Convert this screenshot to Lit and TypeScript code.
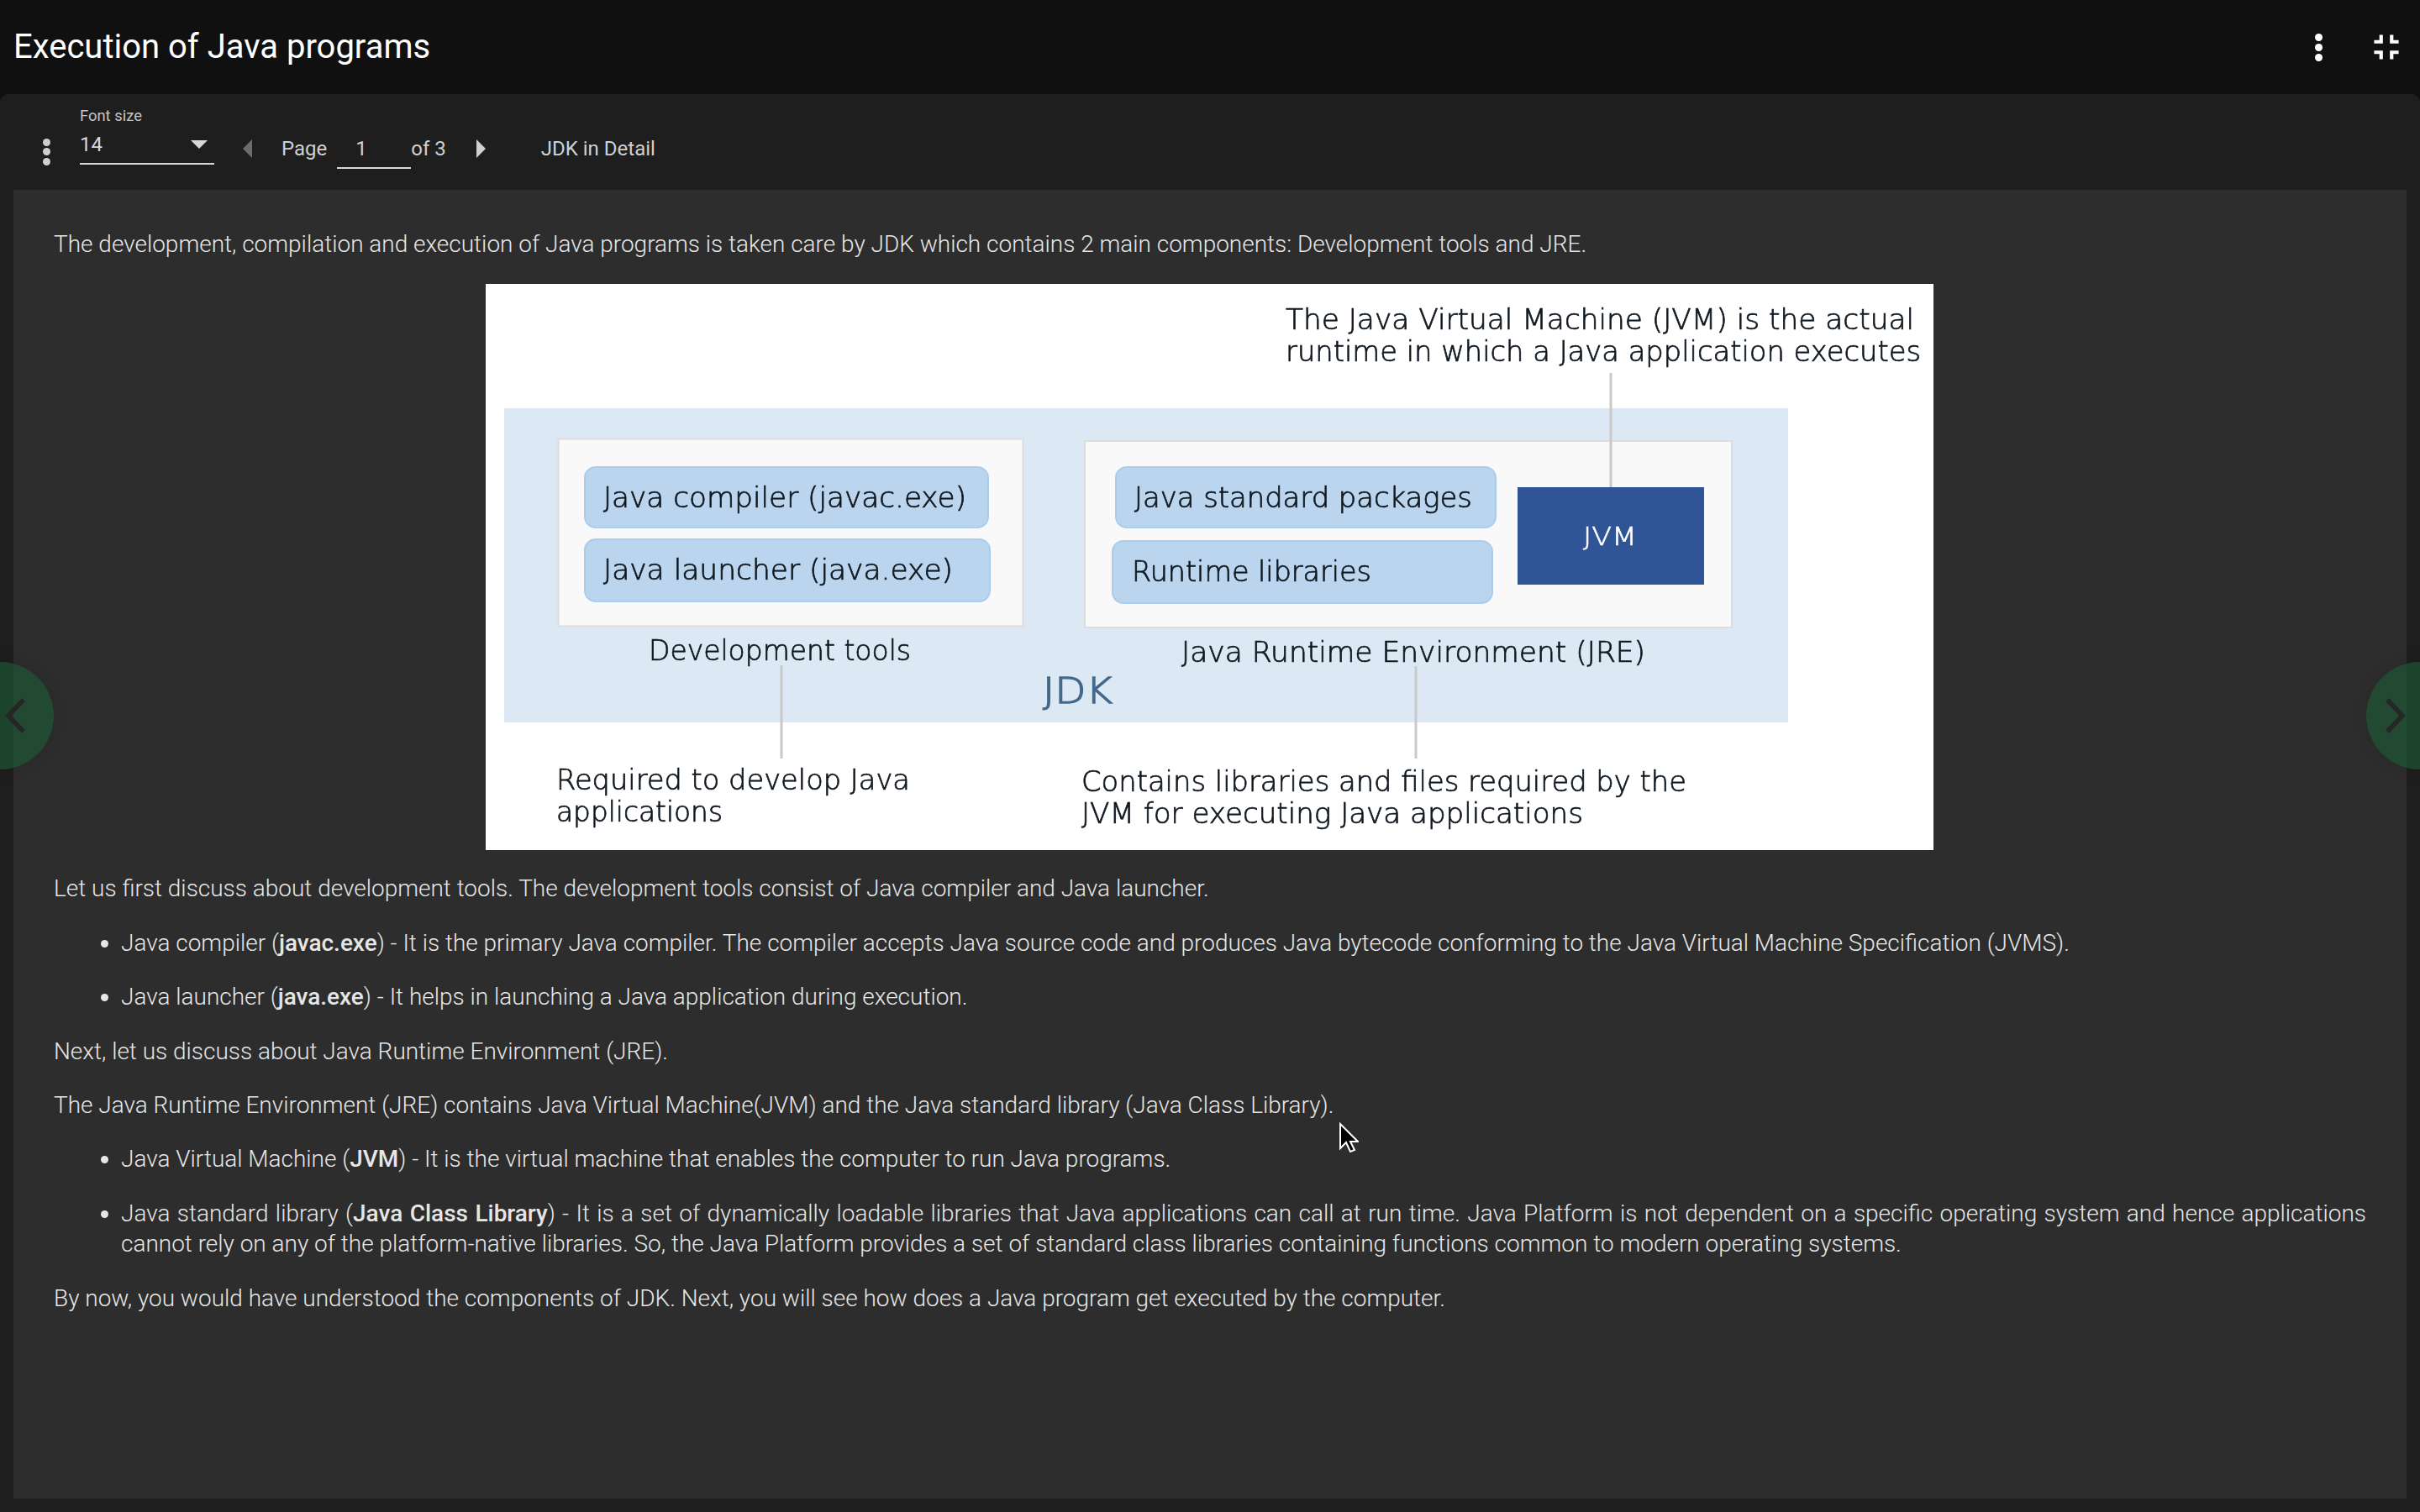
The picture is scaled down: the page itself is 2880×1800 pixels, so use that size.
import { html, svg, css, LitElement, TemplateResult } from 'lit';
import { customElement } from 'lit/decorators.js';

// x, baseline, width in the picture's own coordinates (viewBox is page coordinates)
const LABELS: [string, number, number, number][] = [
  ['The Java Virtual Machine (JVM) is the actual', 1530, 392, 748],
  ['runtime in which a Java application executes', 1530, 430, 756],
  ['Java compiler (javac.exe)', 718, 604, 432],
  ['Java launcher (java.exe)', 718, 690, 416],
  ['Java standard packages', 1350, 604, 402],
  ['Runtime libraries', 1347, 692, 285],
  ['Development tools', 772, 786, 312],
  ['Java Runtime Environment (JRE)', 1406, 788, 552],
  ['Required to develop Java', 662, 940, 421],
  ['applications', 662, 978, 198],
  ['Contains libraries and files required by the', 1287, 942, 720],
  ['JVM for executing Java applications', 1287, 980, 597],
];

const PILLS: [number, number, number, number][] = [
  [696, 556, 480, 72],
  [696, 642, 482, 74],
  [1328, 556, 452, 72],
  [1324, 644, 452, 74],
];

const LINES: [number, number, number][] = [
  [930, 792, 903],
  [1685, 793, 903],
  [1917, 444, 580],
];

@customElement('app-root')
export class AppRoot extends LitElement {
  private diagram(): TemplateResult {
    return html`
      <svg class="diagram" viewBox="578 338 1723 674" width="1723" height="674">
        <rect x="578" y="338" width="1723" height="674" fill="#fff"></rect>
        <rect x="600" y="486" width="1528" height="374" fill="#dce9f5"></rect>
        <rect x="664.5" y="522.5" width="553" height="223" fill="#f9f9f9" stroke="#dcdcdc" stroke-width="2"></rect>
        <rect x="1291" y="525" width="770" height="222" fill="#f9f9f9" stroke="#dcdcdc" stroke-width="2"></rect>
        ${PILLS.map(
          ([x, y, w, h]) =>
            svg`<rect x=${x} y=${y} width=${w} height=${h} rx="13" fill="#bbd5ee" stroke="#acccec" stroke-width="2"></rect>`
        )}
        <rect x="1806" y="580" width="222" height="116" fill="#2f5597"></rect>
        ${LINES.map(
          ([x, y1, y2]) =>
            svg`<line x1=${x} x2=${x} y1=${y1} y2=${y2} stroke="#c9c9c9" stroke-width="3"></line>`
        )}
        ${LABELS.map(
          ([t, x, y, w]) =>
            svg`<text x=${x} y=${y} textLength=${w} lengthAdjust="spacingAndGlyphs" class="lbl">${t}</text>`
        )}
        <text x="1884" y="649" textLength="64" lengthAdjust="spacingAndGlyphs" class="jvm">JVM</text>
        <text x="1241" y="837" textLength="83" lengthAdjust="spacingAndGlyphs" class="jdk">JDK</text>
      </svg>
    `;
  }

  render(): TemplateResult {
    return html`
      <header class="topbar">
        <h1>Execution of Java programs</h1>
        <div class="top-actions">
          <span class="dots big"><i></i><i></i><i></i></span>
          <svg class="exit" viewBox="0 0 24 24" width="50" height="50">
            <path fill="#fff" d="M5 16h3v3h2v-5H5v2zm3-8H5v2h5V5H8v3zm6 11h2v-3h3v-2h-5v5zm2-11V5h-2v5h5V8h-3z"></path>
          </svg>
        </div>
      </header>

      <section class="panel">
        <div class="toolbar">
          <span class="dots small"><i></i><i></i><i></i></span>
          <div class="font-field">
            <label>Font size</label>
            <div class="select"><span>14</span><b class="arrow"></b></div>
          </div>
          <b class="caret prev"></b>
          <span class="page">Page</span>
          <span class="page-input">1</span>
          <span>of 3</span>
          <b class="caret next"></b>
          <span class="section-name">JDK in Detail</span>
        </div>

        <article class="content">
          <p>The development, compilation and execution of Java programs is taken care by JDK which contains 2 main components: Development tools and JRE.</p>
          ${this.diagram()}
          <p>Let us first discuss about development tools. The development tools consist of Java compiler and Java launcher.</p>
          <ul>
            <li>Java compiler (<b>javac.exe</b>) - It is the primary Java compiler. The compiler accepts Java source code and produces Java bytecode conforming to the Java Virtual Machine Specification (JVMS).</li>
            <li>Java launcher (<b>java.exe</b>) - It helps in launching a Java application during execution.</li>
          </ul>
          <p>Next, let us discuss about Java Runtime Environment (JRE).</p>
          <p>The Java Runtime Environment (JRE) contains Java Virtual Machine(JVM) and the Java standard library (Java Class Library).</p>
          <ul>
            <li>Java Virtual Machine (<b>JVM</b>) - It is the virtual machine that enables the computer to run Java programs.</li>
            <li>Java standard library (<b>Java Class Library</b>) - It is a set of dynamically loadable libraries that Java applications can call at run time. Java Platform is not dependent on a specific operating system and hence applications cannot rely on any of the platform-native libraries. So, the Java Platform provides a set of standard class libraries containing functions common to modern operating systems.</li>
          </ul>
          <p>By now, you would have understood the components of JDK. Next, you will see how does a Java program get executed by the computer.</p>
        </article>
      </section>

      <div class="nav left">
        <svg viewBox="0 0 40 48" width="40" height="48"><path d="M26 5 8 24l18 19" fill="none" stroke="#262626" stroke-width="5.5"></path></svg>
      </div>
      <div class="nav right">
        <svg viewBox="0 0 40 48" width="40" height="48"><path d="M14 5l18 19-18 19" fill="none" stroke="#262626" stroke-width="5.5"></path></svg>
      </div>

      <svg class="cursor" viewBox="0 0 24 36" width="24" height="36">
        <path d="M2 2v29l7-7 5 11 5-2-5-10h9z" fill="#000" stroke="#fff" stroke-width="2"></path>
      </svg>
    `;
  }

  static styles = css`
    :host {
      display: flex;
      flex-direction: column;
      position: relative;
      height: 100vh;
      overflow: hidden;
      background: #101010;
      font-family: Roboto, 'Noto Sans', sans-serif;
      color: #dcdcdc;
    }

    .topbar {
      flex: none;
      height: 112px;
      display: flex;
      align-items: center;
      justify-content: space-between;
      padding: 0 15px 0 16px;
      box-sizing: border-box;
    }

    h1 {
      margin: -2px 0 0;
      font-size: 40px;
      font-weight: 400;
      color: #fff;
    }

    .top-actions {
      display: flex;
      align-items: center;
      gap: 51px;
    }

    .dots {
      display: flex;
      flex-direction: column;
      align-items: center;
    }

    .dots i {
      display: block;
      border-radius: 50%;
    }

    .dots.big {
      gap: 3px;
    }

    .dots.big i {
      width: 9px;
      height: 9px;
      background: #fff;
    }

    .dots.small {
      gap: 2.5px;
      margin: 8px 35px 0 0;
    }

    .dots.small i {
      width: 9px;
      height: 9px;
      background: #cfcfcf;
    }

    .panel {
      flex: 1;
      min-height: 0;
      display: flex;
      flex-direction: column;
      background: #1e1e1e;
      border-radius: 10px 10px 0 0;
    }

    .toolbar {
      flex: none;
      height: 114px;
      box-sizing: border-box;
      padding: 15px 0 0 51px;
      display: flex;
      align-items: center;
      font-size: 24px;
      font-weight: 400;
      color: #d0d0d0;
    }

    .font-field {
      width: 160px;
      display: flex;
      flex-direction: column;
      margin: -30px 34px 0 0;
    }

    .font-field label {
      font-size: 18.4px;
      line-height: 22px;
      margin-bottom: 5px;
      color: #c4c4c4;
    }

    .select {
      display: flex;
      justify-content: space-between;
      align-items: center;
      height: 42px;
      padding: 0 8px 4px 0;
      box-sizing: border-box;
      border-bottom: 2px solid #d8d8d8;
      color: #d8d8d8;
    }

    .arrow {
      width: 0;
      height: 0;
      border-left: 10px solid transparent;
      border-right: 10px solid transparent;
      border-top: 10px solid #d8d8d8;
    }

    .caret {
      width: 0;
      height: 0;
      border-top: 11px solid transparent;
      border-bottom: 11px solid transparent;
    }

    .caret.prev {
      border-right: 11px solid #6c6c6c;
      margin-right: 35px;
    }

    .caret.next {
      border-left: 11px solid #d0d0d0;
      margin: 0 66px 0 36px;
    }

    .page {
      margin-right: 12px;
    }

    .page-input {
      width: 88px;
      height: 42px;
      line-height: 36px;
      box-sizing: border-box;
      padding-left: 22px;
      margin-top: 6px;
      border-bottom: 2px solid #d8d8d8;
    }

    .content {
      flex: 1;
      min-height: 0;
      margin: 0 16px 16px;
      padding: 47px 48px 0;
      background: #2d2d2d;
      font-size: 27.97px;
      font-weight: 300;
      line-height: 36.4px;
      color: #e6e6e6;
    }

    p {
      margin: 0 0 28px;
    }

    ul {
      margin: 0 0 28px;
      padding: 0 0 0 80px;
    }

    li {
      margin-bottom: 28px;
      text-align: justify;
    }

    li:last-child {
      margin-bottom: 0;
    }

    li b {
      font-weight: 500;
    }

    .diagram {
      display: block;
      margin: 29px 0 28px 514px;
      filter: blur(0.5px);
    }

    .lbl,
    .jvm,
    .jdk {
      font-family: 'DejaVu Sans', sans-serif;
    }

    .lbl {
      font-size: 33px;
      fill: #101820;
      stroke: #101820;
      stroke-width: 0.7px;
    }

    .jvm {
      font-size: 31px;
      fill: #fff;
      stroke: #fff;
      stroke-width: 0.6px;
    }

    .jdk {
      font-size: 42px;
      fill: #44688a;
      stroke: #44688a;
      stroke-width: 1.3px;
    }

    .nav {
      position: absolute;
      top: 788px;
      width: 128px;
      height: 128px;
      border-radius: 50%;
      background: rgba(27, 94, 53, 0.6);
      box-shadow: 0 0 20px rgba(0, 0, 0, 0.12);
      display: flex;
      align-items: center;
    }

    .nav.left {
      left: -64px;
      justify-content: flex-end;
    }

    .nav.left svg {
      margin-right: 22px;
    }

    .nav.right {
      right: -64px;
      justify-content: flex-start;
    }

    .nav.right svg {
      margin-left: 11px;
    }

    .cursor {
      position: absolute;
      left: 1593px;
      top: 1336px;
    }
  `;
}
